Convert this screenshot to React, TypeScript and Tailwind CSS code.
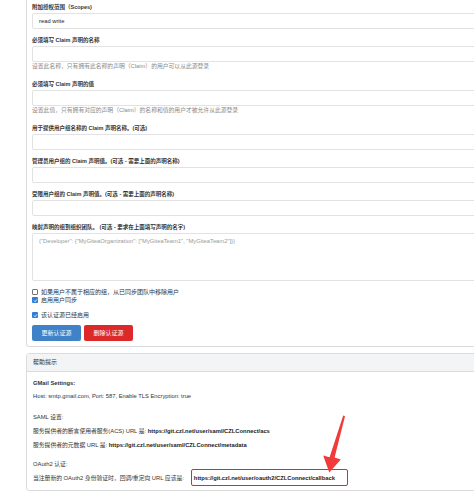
import type { ReactNode } from "react";

const font = { fontFamily: '"Liberation Sans", "Noto Sans CJK SC", sans-serif' };

function Label({ children }: { children: ReactNode }) {
  return <div className="mb-[2px] h-[8px] text-[5.5px] leading-[8px] font-semibold text-[#333]">{children}</div>;
}

function TextInput({ value }: { value?: string }) {
  return (
    <div className="flex h-[16px] items-center rounded-[2px] border border-[#e2e2e2] bg-white pl-[6px] text-[5.8px] text-[#222]">
      {value}
    </div>
  );
}

function Field({ label, value, help }: { label: string; value?: string; help?: string }) {
  return (
    <div className={help ? "mb-[10px]" : "mb-[7px]"}>
      <Label>{label}</Label>
      <TextInput value={value} />
      {help && <div className="h-[8px] text-[5.8px] leading-[8px] text-[#8a8a8a]">{help}</div>}
    </div>
  );
}

function Check({ checked, label }: { checked?: boolean; label: string }) {
  return (
    <div className="flex h-[8px] items-center gap-[3px] text-[6px] text-[#333]">
      {checked ? (
        <span className="flex h-[6px] w-[6px] items-center justify-center rounded-[1px] bg-[#2f7fd6]">
          <svg viewBox="0 0 10 10" className="h-[5px] w-[5px]">
            <path d="M2 5.2 4.2 7.4 8.2 2.8" fill="none" stroke="white" strokeWidth="1.8" />
          </svg>
        </span>
      ) : (
        <span className="h-[6px] w-[6px] rounded-[1px] border border-[#777] bg-white" />
      )}
      <span>{label}</span>
    </div>
  );
}

function Url({ children }: { children: ReactNode }) {
  return <span className="font-semibold text-[#222]">{children}</span>;
}

export default function App() {
  return (
    <div className="relative h-[500px] w-[474px] overflow-hidden bg-white" style={font}>
      <div className="ml-[26px] -mr-[10px] -mt-[4px] rounded-b-[3px] border border-t-0 border-[#dcdcdc] px-[5px] pb-[5px] pt-[7px]">
        <Field label="附加授权范围（Scopes)" value="read write" />
        <Field label="必须填写 Claim 声明的名称" help="设置此名称，只有拥有此名称的声明（Claim）的用户可以从此源登录" />
        <Field label="必须填写 Claim 声明的值" help="设置此值，只有拥有对应的声明（Claim）的名称和值的用户才被允许从此源登录" />
        <Field label="用于提供用户组名称的 Claim 声明名称。(可选)" />
        <Field label="管理员用户组的 Claim 声明值。(可选 - 需要上面的声明名称)" />
        <Field label="受限用户组的 Claim 声明值。(可选 - 需要上面的声明名称)" />
        <div className="mb-[7px]">
          <Label>映射声明的组到组织团队。 (可选 - 要求在上面填写声明的名字)</Label>
          <div className="h-[48px] rounded-[2px] border border-[#e2e2e2] px-[6px] pt-[3px] text-[5.8px] text-[#9a9a9a]">
            {'{"Developer": {"MyGiteaOrganization": ["MyGiteaTeam1", "MyGiteaTeam2"]}}'}
          </div>
        </div>
        <Check label="如果用户不属于相应的组，从已同步团队中移除用户" />
        <Check checked label="启用用户同步" />
        <div className="mt-[7px]">
          <Check checked label="该认证源已经启用" />
        </div>
        <div className="mt-[6px] flex gap-[3px]">
          <button className="flex h-[16px] w-[49px] items-center justify-center rounded-[2px] bg-[#3f82c8] text-[6px] text-white">
            更新认证源
          </button>
          <button className="flex h-[16px] w-[49px] items-center justify-center rounded-[2px] bg-[#dc2a2a] text-[6px] text-white">
            删除认证源
          </button>
        </div>
      </div>

      <div className="ml-[26px] -mr-[10px] mt-[6px] rounded-[3px] border border-[#dcdcdc]">
        <div className="flex h-[18px] items-center border-b border-[#dcdcdc] bg-[#f3f4f5] px-[6px] text-[6px] text-[#333]">
          帮助提示
        </div>
        <div className="px-[6px] pt-[7px] pb-[4px] text-[5.8px] leading-[8px] text-[#333]">
          <div className="font-semibold">GMail Settings:</div>
          <div className="mt-[5px]">Host: smtp.gmail.com, Port: 587, Enable TLS Encryption: true</div>
          <div className="mt-[13px]">SAML 设置:</div>
          <div className="mt-[6px]">
            服务提供者的断言使用者服务(ACS) URL 是: <Url>https://git.czl.net/user/saml/CZLConnect/acs</Url>
          </div>
          <div className="mt-[6px]">
            服务提供者的元数据 URL 是: <Url>https://git.czl.net/user/saml/CZLConnect/metadata</Url>
          </div>
          <div className="mt-[11px]">OAuth2 认证:</div>
          <div className="mt-[1px] flex items-center">
            <span>当注册新的 OAuth2 身份验证时，回调/重定向 URL 应该是:</span>
            <span className="ml-[7px] inline-flex h-[17px] w-[157px] items-center rounded-[2px] border border-[#e8262a] pl-[2px]">
              <Url>https://git.czl.net/user/oauth2/CZLConnect/callback</Url>
            </span>
          </div>
        </div>
      </div>

      <svg className="pointer-events-none absolute left-0 top-0" width="474" height="500" viewBox="0 0 474 500">
        <path d="M343.2 415.6 L345 416.3 L334.6 457.5 L340.8 459.4 L329.3 472.5 L323.2 455.4 L329.6 457.2 Z" fill="#f23a3a" />
      </svg>
    </div>
  );
}
